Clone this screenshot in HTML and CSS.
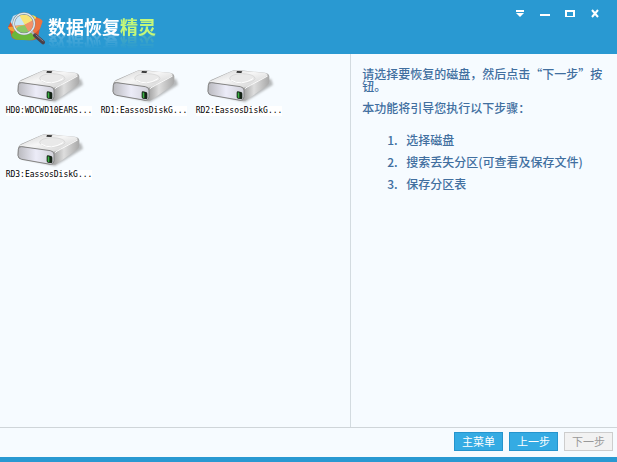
FILE: index.html
```html
<!DOCTYPE html>
<html lang="zh-CN">
<head>
<meta charset="utf-8">
<meta name="viewport" content="width=device-width, initial-scale=1">
<title>数据恢复精灵</title>
<link rel="stylesheet" href="styles.css">
</head>
<body>
<svg class="defs" aria-hidden="true">
  <defs>
    <linearGradient id="top" x1="0" y1="0" x2="1" y2="1"><stop offset="0" stop-color="#cfcfcf"/><stop offset=".45" stop-color="#f6f6f6"/><stop offset="1" stop-color="#cccccc"/></linearGradient>
    <linearGradient id="side" x1="0" y1="0" x2="1" y2="0"><stop offset="0" stop-color="#a5a5a5"/><stop offset=".6" stop-color="#a8a8a8"/><stop offset=".75" stop-color="#dedede"/><stop offset="1" stop-color="#a8a8a8"/></linearGradient>
    <linearGradient id="face" x1="0" y1="0" x2="1" y2="0"><stop offset="0" stop-color="#b9b9be"/><stop offset=".5" stop-color="#ececf8"/><stop offset="1" stop-color="#d2d2da"/></linearGradient>
    <filter id="soft" x="-20%" y="-20%" width="140%" height="140%"><feGaussianBlur stdDeviation="3"/></filter>
    <symbol id="drive" viewBox="0 0 216 120">
      <path d="M20 84L126 108L210 56L204 38L120 60Z" fill="#777" opacity=".5" filter="url(#soft)"/>
      <path d="M15 56Q15 48 24 42L86 15Q94 11 102 12L186 20Q198 22 199 31V46Q199 54 192 59L134 100Q126 106 116 104L24 87Q15 84 14 76Z" fill="url(#side)"/>
      <path d="M18 47L86 16Q94 12 102 13L186 21Q198 24 190 31L132 62Q125 66 114 65Z" fill="url(#top)"/>
      <ellipse cx="118" cy="37" rx="38" ry="14" fill="#e9e9e9" stroke="#d0d0d0" stroke-width="2"/>
      <path d="M84 42Q114 61 150 38" fill="none" stroke="#fff" stroke-width="3"/>
      <path d="M102 15L118 16L115 21L100 20Z" fill="#2e2e2e"/>
      <path d="M126 68Q130 64 142 58L194 30" fill="none" stroke="#fafafa" stroke-width="3"/>
      <path d="M16 58Q16 49 26 50L112 62Q122 64 123 72V93Q122 104 112 103L26 88Q16 86 15 77Z" fill="url(#face)" stroke="#858585" stroke-width="3"/>
      <path d="M101 80Q101 76 105 76L114 78Q118 79 118 83V96Q118 100 114 99L105 98Q101 97 101 93Z" fill="#142216"/>
      <path d="M104 79L109 80V96L104 95Z" fill="#3cb445"/>
    </symbol>
  </defs>
</svg>
<div class="window">
  <header class="titlebar">
    <div class="brand">
      <svg class="logo" viewBox="0 0 132 120" aria-hidden="true">
        <path d="M20 42L12 57Q11 62 17 64L22 84Q25 94 38 95L78 97Q98 97 102 86L108 60L114 40L98 27L48 20L28 24Z" fill="#d8542d"/>
        <path d="M20 42L27 24Q36 18 50 19L64 50L26 54Z" fill="#b9dff8"/>
        <path d="M44 19L86 22Q97 24 98 34L62 50Z" fill="#f6dd50"/>
        <path d="M62 50L98 30Q110 30 116 40L108 62L88 80L70 68Z" fill="#ee7440"/>
        <path d="M12 58L62 50L66 60L40 76L17 66Z" fill="#f0a43a"/>
        <path d="M22 80L42 56L62 51L72 68L94 84Q94 97 76 97L38 95Q25 92 22 80Z" fill="#6bb83b"/>
        <circle cx="60" cy="47" r="31" fill="#fff" fill-opacity=".22" stroke="#7e8a90" stroke-width="7"/>
        <circle cx="60" cy="47" r="31" fill="none" stroke="#e3eaed" stroke-width="4"/>
        <path d="M82 70L94 83" stroke="#adb5ba" stroke-width="7"/>
        <path d="M93 82L117 103" stroke="#4b4048" stroke-width="12" stroke-linecap="round"/>
        <path d="M96 81L117 99" stroke="#92818a" stroke-width="3" stroke-linecap="round"/>
      </svg>
      <h1 class="title">数据恢复<span class="accent">精灵</span></h1>
    </div>
    <div class="controls">
      <button type="button" class="control" aria-label="菜单"><svg viewBox="0 0 12 12"><path d="M2 2H10V4H2ZM2 5H10L6 9Z" fill="#fff"/></svg></button>
      <button type="button" class="control" aria-label="最小化"><svg viewBox="0 0 12 12"><path d="M1 6H11V8H1Z" fill="#fff"/></svg></button>
      <button type="button" class="control" aria-label="最大化"><svg viewBox="0 0 12 12"><path fill-rule="evenodd" d="M1 2H11V9H1ZM3 4V8H9V4Z" fill="#fff"/></svg></button>
      <button type="button" class="control" aria-label="关闭"><svg viewBox="0 0 12 12"><path d="M3 2L9 9M9 2L3 9" stroke="#fff" stroke-width="2"/></svg></button>
    </div>
  </header>
  <main class="content">
    <ul class="disks">
      <li><button type="button" class="disk"><svg class="drive" aria-hidden="true"><use href="#drive"/></svg><span class="name">HD0:WDCWD10EARS...</span></button></li>
      <li><button type="button" class="disk"><svg class="drive" aria-hidden="true"><use href="#drive"/></svg><span class="name">RD1:EassosDiskG...</span></button></li>
      <li><button type="button" class="disk"><svg class="drive" aria-hidden="true"><use href="#drive"/></svg><span class="name">RD2:EassosDiskG...</span></button></li>
      <li><button type="button" class="disk"><svg class="drive" aria-hidden="true"><use href="#drive"/></svg><span class="name">RD3:EassosDiskG...</span></button></li>
    </ul>
    <section class="guide">
      <p>请选择要恢复的磁盘，然后点击“下一步”按钮。</p>
      <p>本功能将引导您执行以下步骤：</p>
      <ol class="steps">
        <li>选择磁盘</li>
        <li>搜索丢失分区(可查看及保存文件)</li>
        <li>保存分区表</li>
      </ol>
    </section>
  </main>
  <footer class="actions">
    <button type="button" class="action">主菜单</button>
    <button type="button" class="action">上一步</button>
    <button type="button" class="action" disabled>下一步</button>
  </footer>
</div>
</body>
</html>
```
FILE: styles.css
```css
* {
  box-sizing: border-box;
}

body {
  margin: 0;
  font-family: "Noto Sans CJK SC", sans-serif;
  font-size: 12px;
  background: #f6fbff;
}

button {
  margin: 0;
  padding: 0;
  border: 0;
  background: none;
  font: inherit;
  color: inherit;
}

.defs {
  position: absolute;
  width: 0;
  height: 0;
}

.window {
  display: flex;
  flex-direction: column;
  min-height: 100vh;
  border-bottom: 5px solid #2999d2;
}

.titlebar {
  display: flex;
  justify-content: space-between;
  align-items: flex-start;
  padding: 8px 16px 6px 4px;
  background: #2999d2;
}

.brand {
  display: flex;
}

.logo {
  width: 44px;
  height: 40px;
}

.title {
  margin: 6px 0 0;
  font-size: 18px;
  line-height: 24px;
  height: 24px;
  font-weight: 700;
  color: #fff;
  -webkit-box-reflect: below -6px linear-gradient(transparent 30%, rgba(0, 0, 0, 0.25));
}

.accent {
  color: #c4f77a;
}

.controls {
  display: flex;
  gap: 13px;
}

.control svg {
  display: block;
  width: 12px;
  height: 12px;
}

.content {
  flex: 1;
  display: grid;
  grid-template-columns: 21fr 16fr;
}

.disks {
  display: flex;
  flex-wrap: wrap;
  align-content: flex-start;
  gap: 14px 5px;
  margin: 0;
  padding: 12px 4px;
  list-style: none;
}

.disk {
  display: flex;
  flex-direction: column;
  align-items: center;
  width: 90px;
}

.drive {
  width: 72px;
  height: 40px;
}

.name {
  background: #fff;
  font-family: "DejaVu Sans Mono", monospace;
  font-size: 8px;
  line-height: 10px;
  color: #000;
}

.guide {
  padding: 14px 12px 14px 11px;
  border-left: 1px solid #d3dbe0;
  font-weight: 500;
  line-height: 12px;
  color: #416f9f;
}

.guide p {
  margin: 0 0 10px;
}

.steps {
  margin: 20px 0 0 25px;
  padding: 0;
  list-style: none;
  counter-reset: step;
}

.steps li {
  display: flex;
  margin-bottom: 10px;
  counter-increment: step;
}

.steps li::before {
  content: counter(step) ".";
  width: 19px;
}

.actions {
  display: flex;
  justify-content: flex-end;
  gap: 6px;
  padding: 4px 4px 6px;
  border-top: 1px solid #cfd5d9;
}

.action {
  width: 49px;
  height: 19px;
  border: 1px solid #2594cd;
  background: #34abe3;
  font-size: 11px;
  line-height: 17px;
  color: #fff;
}

.action:disabled {
  border-color: #cdcdcd;
  background: #f2f2f2;
  color: #999;
}
```
